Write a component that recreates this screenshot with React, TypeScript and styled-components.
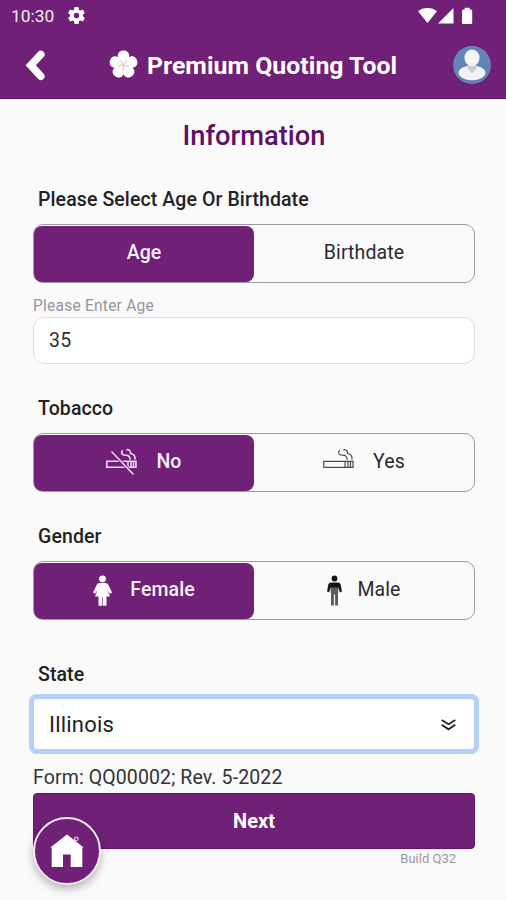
import React, { useState } from "react";
import styled, { createGlobalStyle, css } from "styled-components";

const purple = "#702076";

const GlobalStyle = createGlobalStyle`
  *, *::before, *::after { box-sizing: border-box; }
  html, body { margin: 0; padding: 0; background: #fafafa; }
  body { font-family: Roboto, "Liberation Sans", sans-serif; color: #222225; }
  button, input { font-family: inherit; margin: 0; }
  svg { display: block; flex: none; }
`;

const Screen = styled.div`
  position: relative;
  width: 506px;
  height: 900px;
  overflow: hidden;
  background: #fafafa;
`;

const Header = styled.header`
  height: 99px;
  background: ${purple};
  border-bottom: 1px solid #5c1063;
  color: #fff;
`;

const StatusBar = styled.div`
  display: flex;
  align-items: center;
  height: 31px;
  padding: 0 33px 0 11px;
`;

const Clock = styled.span`
  width: 57px;
  font-size: 17.4px;
  line-height: 32px;
  color: #f3eaf4;
`;

const SystemIcons = styled.div`
  margin-left: auto;
`;

const TitleBar = styled.div`
  display: grid;
  grid-template-columns: 50px 1fr 38px;
  align-items: center;
  height: 67px;
  padding: 0 15px 0 20px;
`;

const IconButton = styled.button`
  width: 38px;
  height: 40px;
  padding: 0;
  border: 0;
  background: none;
  color: #fff;
  cursor: pointer;
`;

const Brand = styled.div`
  display: flex;
  align-items: center;
  padding-left: 39px;
  gap: 9px;
`;

const Title = styled.h1`
  margin: 0;
  padding-top: 2px;
  font-size: 24.8px;
  font-weight: 700;
  line-height: 66px;
  letter-spacing: 0.05px;
  white-space: nowrap;
`;

const Form = styled.form`
  display: flex;
  flex-direction: column;
  padding: 0 31px 0 33px;
`;

const Heading = styled.h2`
  margin: 0 0 3px;
  padding-top: 2px;
  font-size: 27.3px;
  font-weight: 500;
  line-height: 71px;
  letter-spacing: 0;
  text-align: center;
  color: #5f1068;
`;

const Label = styled.div<{ $gap?: number }>`
  height: 49px;
  margin-top: ${({ $gap = 0 }) => $gap}px;
  padding-left: 5px;
  font-size: 19.5px;
  font-weight: 500;
  line-height: 49px;
  letter-spacing: 0.1px;
`;

const Segmented = styled.div`
  display: grid;
  grid-template-columns: 220px 1fr;
  height: 59px;
  padding: 1px 0;
  border: 1px solid #9c9aa8;
  border-radius: 10px;
`;

const Segment = styled.button<{ $selected: boolean; $gap?: number }>`
  display: flex;
  align-items: center;
  justify-content: center;
  gap: ${({ $gap = 0 }) => $gap}px;
  height: 56px;
  margin: 0;
  padding: 0 0 3px;
  border: 0;
  border-radius: 8px;
  background: transparent;
  color: #2b2b2e;
  font-size: 19.5px;
  font-weight: 400;
  letter-spacing: 0.1px;
  cursor: pointer;

  svg {
    margin-top: 1px;
  }

  ${({ $selected }) =>
    $selected &&
    css`
      background: ${purple};
      color: #f8f0f8;
      font-weight: 500;
    `}
`;

const Caption = styled.label`
  height: 23px;
  margin-top: 11px;
  font-size: 15.6px;
  line-height: 24px;
  letter-spacing: 0.2px;
  color: #96969e;
`;

const AgeInput = styled.input`
  height: 47px;
  padding: 0 15px 1px;
  border: 1px solid #dfdfe2;
  border-radius: 11px;
  outline: 0;
  background: #fff;
  color: #303034;
  font-size: 19.5px;
  letter-spacing: 0.3px;
`;

const SelectField = styled.div`
  display: flex;
  align-items: center;
  justify-content: space-between;
  height: 50px;
  margin: 0 1px;
  padding: 0 18px 0 15px;
  border-radius: 3px;
  background: #fff;
  box-shadow: 0 0 0 5px #b7d0fa;
  font-size: 22px;
  letter-spacing: 0.2px;
`;

const FormNumber = styled.div`
  height: 32px;
  margin-top: 12px;
  font-size: 19.5px;
  line-height: 33px;
  letter-spacing: 0.12px;
  color: #333338;
`;

const NextButton = styled.button`
  height: 56px;
  padding: 0 0 1px;
  border: 1px solid #64166b;
  border-radius: 4px;
  background: ${purple};
  color: #fff;
  font-size: 20px;
  font-weight: 700;
  cursor: pointer;
`;

const Build = styled.div`
  padding-right: 19px;
  font-size: 13px;
  line-height: 19px;
  text-align: right;
  color: #98989c;
`;

const HomeButton = styled.button`
  position: absolute;
  left: 33px;
  bottom: 15px;
  display: flex;
  align-items: center;
  justify-content: center;
  width: 68px;
  height: 68px;
  padding: 0;
  border: 2px solid #f4e9f5;
  border-radius: 50%;
  background: ${purple};
  box-shadow: 0 4px 8px rgba(0, 0, 0, 0.28);
  cursor: pointer;
`;

const GearIcon = () => (
  <svg width="17" height="17" viewBox="2 2 20 20" fill="#fff">
    <path d="M19.4 13c0-.3.1-.6.1-1s0-.7-.1-1l2.1-1.6c.2-.2.2-.4.1-.6l-2-3.5c-.1-.2-.4-.3-.6-.2l-2.5 1c-.5-.4-1.100-.7-1.700-1l-.4-2.600c0-.2-.2-.4-.5-.4h-4c-.2 0-.4.2-.5.4L9 5.100c-.6.2-1.200.6-1.700 1l-2.500-1c-.2-.1-.5 0-.6.2l-2 3.500c-.1.2-.1.5.1.6L4.500 11c0 .3-.1.600-.1 1s0 .7.1 1l-2.100 1.600c-.2.2-.2.4-.1.6l2 3.500c.1.2.4.3.6.2l2.500-1c.5.4 1.100.7 1.700 1l.4 2.600c0 .2.200.4.500.4h4c.2 0 .4-.2.5-.4l.4-2.600c.6-.2 1.200-.6 1.700-1l2.500 1c.2.1.5 0 .6-.2l2-3.500c.1-.2.1-.500-.1-.6zM12 15.200a3.200 3.200 0 1 1 0-6.400 3.200 3.200 0 0 1 0 6.400z" />
  </svg>
);

const SignalIcons = () => (
  <svg width="55" height="18" viewBox="0 0 55 18" fill="#fff">
    <path d="M0 4.300C4.500-.2 14.500-.2 19 4.300L9.500 16z" />
    <path d="M20 16.500 35.500 1v15.500z" />
    <path d="M44 4q0-1.500 1.500-1.500h1.200V.7h5v1.800h1.200q1.300 0 1.300 1.500v11.700q0 1.300-1.300 1.300h-7.600q-1.300 0-1.300-1.300z" />
  </svg>
);

const BackIcon = () => (
  <svg width="38" height="40" viewBox="0 0 38 40" fill="none" stroke="currentColor" strokeWidth="7.600" strokeLinecap="round" strokeLinejoin="miter">
    <path d="M20.800 9.500 10.800 20.200 20.800 31.200" />
  </svg>
);

const petals = [0, 72, 144, 216, 288];

const FlowerIcon = () => (
  <svg width="29" height="30" viewBox="-14.500 -14.800 29 30">
    {petals.map((a) => (
      <path
        key={a}
        transform={`rotate(${a})`}
        d="M0 .5C-4-3-5.700-6-5.700-9C-5.700-12.500-2.800-14.200 0-14.200S5.700-12.500 5.700-9C5.700-6 4-3 0 .5z"
        fill="#fff"
      />
    ))}
    {petals.map((a) => (
      <path key={a} transform={`rotate(${a})`} d="M0 0Q2.600-1.500 3.300-4.800" fill="none" stroke="#c9b3ca" strokeWidth="0.800" />
    ))}
  </svg>
);

const Avatar = () => (
  <svg width="38" height="38" viewBox="0 0 38 38">
    <circle cx="19" cy="19" r="19" fill="#6683b8" />
    <ellipse cx="19" cy="26.800" rx="13.400" ry="7.400" fill="#f3f4f5" />
    <path d="M14.500 19h9v4L19 27.500 14.500 23z" fill="#cdcfd2" />
    <ellipse cx="19" cy="11.800" rx="7.600" ry="8.300" fill="#f3f4f5" />
  </svg>
);

const CigaretteIcon = ({ crossed }: { crossed?: boolean }) => (
  <svg
    width="31"
    height="28"
    viewBox="0 0 31 28"
    fill="none"
    stroke={crossed ? "#ead9eb" : "#4c4c50"}
    strokeWidth={crossed ? 1.600 : 1.200}
  >
    <path d="M.8 13.300H30v6H.8zM22 13.300v6M25 13.300v6M27.500 13.300v6" />
    <path d="M16.800 2.200c-2.600 2.600-.6 5.300 2.700 5 3.200-.2 4.700 1.800 4.700 4.500" />
    <path d="M20.300 1.800c2.500-.6 4.700 1.200 4.200 3.700 3.200.2 4.900 2.600 4.500 6.200" />
    {crossed && (
      <>
        <path d="M5.500 3.500 27.500 26.500" stroke={purple} strokeWidth="3.200" />
        <path d="M5.500 3.500 27.500 26.500" />
      </>
    )}
  </svg>
);

const FemaleIcon = () => (
  <svg width="19" height="31" viewBox="0 0 19 31" fill="#fff">
    <circle cx="9.500" cy="3.900" r="3.400" />
    <path d="M6.300 8h6.400q1.800 0 2.700 1.900l3.300 7.200q.3 1.400-1 1.500-1 0-1.500-.9l-1.800-3 2.600 6.800h-3.500v9.300H9.800V22H9.200v8.800H5.500v-9.300H2l2.600-6.800-1.800 3q-.5.900-1.500.9-1.300-.1-1-1.500l3.300-7.200Q4.500 8 6.300 8z" />
  </svg>
);

const MaleIcon = () => (
  <svg width="15" height="31" viewBox="0 0 15 31">
    <circle cx="7.500" cy="3.500" r="2.900" fill="#161616" />
    <path d="M4 7.500h7q2 0 2.700 2l1.100 6.500q0 1.300-1 1.300t-1.300-1L11.200 12v6H3.800v-6l-1.300 4.300q-.3 1-1.300 1t-1-1.300l1.100-6.500q.7-2 2.700-2z" fill="#161616" />
    <path d="M4 12.500h7v18H8.100V19.500H6.900v11H4z" fill="#5c5c5e" />
  </svg>
);

const DoubleChevron = () => (
  <svg width="15" height="13" viewBox="0 0 15 13" fill="none" stroke="#252528" strokeWidth="1.900">
    <path d="M.7 2 7.500 6.200l6.800-4.200M.7 6.700 7.500 11.400l6.800-4.700" />
  </svg>
);

const HomeIcon = () => (
  <svg width="34" height="34" viewBox="0 0 34 34" fill="#fff">
    <circle cx="26.300" cy="4.800" r="1.800" fill={purple} stroke="#e6d3e8" strokeWidth="1.200" />
    <path d="M17 .5 33.700 13.500H32.300V33H20.700V20.500H13V33H1.700V13.500H.3z" />
  </svg>
);

export default function App() {
  const [mode, setMode] = useState("age");
  const [age, setAge] = useState("35");
  const [tobacco, setTobacco] = useState(false);
  const [gender, setGender] = useState("female");

  return (
    <Screen>
      <GlobalStyle />
      <Header>
        <StatusBar>
          <Clock>10:30</Clock>
          <GearIcon />
          <SystemIcons>
            <SignalIcons />
          </SystemIcons>
        </StatusBar>
        <TitleBar>
          <IconButton aria-label="Back">
            <BackIcon />
          </IconButton>
          <Brand>
            <FlowerIcon />
            <Title>Premium Quoting Tool</Title>
          </Brand>
          <Avatar />
        </TitleBar>
      </Header>

      <Form onSubmit={(e) => e.preventDefault()}>
        <Heading>Information</Heading>

        <Label>Please Select Age Or Birthdate</Label>
        <Segmented>
          <Segment type="button" $selected={mode === "age"} onClick={() => setMode("age")}>
            Age
          </Segment>
          <Segment type="button" $selected={mode === "birthdate"} onClick={() => setMode("birthdate")}>
            Birthdate
          </Segment>
        </Segmented>
        <Caption htmlFor="age">Please Enter Age</Caption>
        <AgeInput id="age" value={age} onChange={(e) => setAge(e.target.value)} />

        <Label $gap={20}>Tobacco</Label>
        <Segmented>
          <Segment type="button" $selected={!tobacco} $gap={19} onClick={() => setTobacco(false)}>
            <CigaretteIcon crossed />
            No
          </Segment>
          <Segment type="button" $selected={tobacco} $gap={19} onClick={() => setTobacco(true)}>
            <CigaretteIcon />
            Yes
          </Segment>
        </Segmented>

        <Label $gap={20}>Gender</Label>
        <Segmented>
          <Segment type="button" $selected={gender === "female"} $gap={18} onClick={() => setGender("female")}>
            <FemaleIcon />
            Female
          </Segment>
          <Segment type="button" $selected={gender === "male"} $gap={15} onClick={() => setGender("male")}>
            <MaleIcon />
            Male
          </Segment>
        </Segmented>

        <Label $gap={30}>State</Label>
        <SelectField role="combobox" aria-expanded={false} tabIndex={0}>
          Illinois
          <DoubleChevron />
        </SelectField>
        <FormNumber>Form: QQ00002; Rev. 5-2022</FormNumber>
        <NextButton type="submit">Next</NextButton>
        <Build>Build Q32</Build>
      </Form>

      <HomeButton aria-label="Home">
        <HomeIcon />
      </HomeButton>
    </Screen>
  );
}
